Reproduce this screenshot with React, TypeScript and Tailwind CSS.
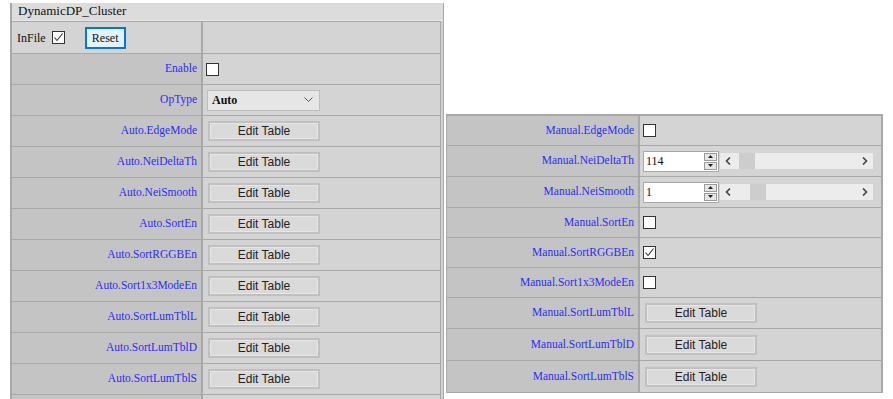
import { ReactNode } from "react";

const autoRows = [
    "Auto.EdgeMode",
    "Auto.NeiDeltaTh",
    "Auto.NeiSmooth",
    "Auto.SortEn",
    "Auto.SortRGGBEn",
    "Auto.Sort1x3ModeEn",
    "Auto.SortLumTblL",
    "Auto.SortLumTblD",
    "Auto.SortLumTblS",
];

export default function App() {
    return (
        <div className="w-[893px] h-[399px] overflow-hidden bg-white flex items-start font-['Liberation_Serif',serif]">
            <div className="ml-[10px] mt-[3px] w-[434px] border-l-2 border-r border-[#a8a8a8] bg-[#d2d2d2]">
                <div className="h-[18px] bg-[#dcdcdc] border-b border-[#e8e8e8] pl-[6px] text-[13px] leading-[16px] text-[#111]">DynamicDP_Cluster</div>
                <div className="mr-[2px] border-t border-[#a8a8a8]">
                    <Row h="h-[32px]" label={
                        <div className="flex items-center h-full pl-[5px] text-[12px] text-[#111] justify-start">
                            InFile
                            <span className="ml-[6px]"><CheckBox checked /></span>
                            <button className="ml-[20px] w-[41px] h-[22px] bg-[#e5f1fb] border-2 border-[#0078d7] text-[12px] text-[#111]">Reset</button>
                        </div>
                    } labelClass="bg-[#d4d4d4]">
                        <span />
                    </Row>
                    <Row label="Enable">
                        <CheckBox />
                    </Row>
                    <Row label="OpType">
                        <Select />
                    </Row>
                    {autoRows.map((r) => (
                        <Row key={r} label={r}>
                            <EditButton />
                        </Row>
                    ))}
                    <Row label="">
                        <span />
                    </Row>
                </div>
            </div>

            <div className="ml-[2px] mt-[114px] w-[437px] border-t-2 border-l border-r-2 border-b border-[#a8a8a8] bg-[#d2d2d2]">
                <Row h="h-[30px]" label="Manual.EdgeMode" right>
                    <CheckBox />
                </Row>
                <Row label="Manual.NeiDeltaTh" right>
                    <NumberSlider value="114" thumb={19} />
                </Row>
                <Row label="Manual.NeiSmooth" right>
                    <NumberSlider value="1" thumb={30} />
                </Row>
                <Row h="h-[30px]" label="Manual.SortEn" right>
                    <CheckBox />
                </Row>
                <Row h="h-[30px]" label="Manual.SortRGGBEn" right>
                    <CheckBox checked />
                </Row>
                <Row h="h-[30px]" label="Manual.Sort1x3ModeEn" right>
                    <CheckBox />
                </Row>
                <Row label="Manual.SortLumTblL" right>
                    <EditButton />
                </Row>
                <Row h="h-[32px]" label="Manual.SortLumTblD" right>
                    <EditButton />
                </Row>
                <Row label="Manual.SortLumTblS" right last>
                    <EditButton />
                </Row>
            </div>
        </div>
    );
}

function Row({ label, children, h = "h-[31px]", right = false, last = false, labelClass = "bg-[#c4c4c4]" }: { label: ReactNode, children: ReactNode, h?: string, right?: boolean, last?: boolean, labelClass?: string }) {
    return (
        <div className={`flex ${h} ${last ? "" : "border-b"} border-[#a8a8a8]`}>
            <div className={`${right ? "w-[193px]" : "w-[191px]"} shrink-0 ${labelClass} border-r-2 border-[#a8a8a8] flex items-center justify-end pr-[4px] text-[11.5px] text-[#2b2bff]`}>
                {typeof label === "string" ? label : <div className="w-full h-full">{label}</div>}
            </div>
            <div className={`flex-1 bg-[#d4d4d4] ${right ? "" : "border-r border-[#a8a8a8]"} flex items-center pl-[3px]`}>
                {children}
            </div>
        </div>
    );
}

function CheckBox({ checked = false }: { checked?: boolean }) {
    return (
        <span className="w-[13px] h-[13px] border border-[#333] bg-white flex items-center justify-center">
            {checked && (
                <svg width="11" height="11" viewBox="0 0 11 11">
                    <polyline points="1.5,5.5 4,8.5 9.5,1.5" fill="none" stroke="#333" strokeWidth="1.1" />
                </svg>
            )}
        </span>
    );
}

function EditButton() {
    return (
        <button className="ml-[2px] w-[112px] h-[20px] bg-[#dadada] border-2 border-[#c0c0c0] shadow-[inset_0_0_0_1px_#e6e6e6] font-['Liberation_Sans',sans-serif] text-[12px] text-[#222] leading-[16px]">
            Edit Table
        </button>
    );
}

function Select() {
    return (
        <div className="ml-[1px] w-[113px] h-[21px] bg-[#e6e6e6] border border-[#bcbcbc] flex items-center justify-between pl-[4px] pr-[6px] text-[12px] font-bold text-[#111]">
            Auto
            <svg width="9" height="6" viewBox="0 0 9 6">
                <polyline points="0.5,0.5 4.5,4.5 8.5,0.5" fill="none" stroke="#555" strokeWidth="1" />
            </svg>
        </div>
    );
}

function NumberSlider({ value, thumb }: { value: string, thumb: number }) {
    return (
        <div className="flex items-center">
            <div className="w-[76px] h-[21px] bg-white border border-[#a8a8a8] flex items-center justify-between">
                <span className="pl-[2px] text-[12px] text-[#111]">{value}</span>
                <div className="flex flex-col gap-px pr-[1px]">
                    <Spin up />
                    <Spin />
                </div>
            </div>
            <div className="ml-[1px] w-[153px] h-[16px] bg-[#ececec] flex items-center relative">
                <svg className="ml-[5px]" width="6" height="8" viewBox="0 0 6 8">
                    <polyline points="5,0.5 1.5,4 5,7.5" fill="none" stroke="#444" strokeWidth="1.6" />
                </svg>
                <div className="absolute top-0 h-[16px] w-[16px] bg-[#cdcdcd]" style={{ left: thumb }} />
                <svg className="ml-auto mr-[5px]" width="6" height="8" viewBox="0 0 6 8">
                    <polyline points="1,0.5 4.5,4 1,7.5" fill="none" stroke="#444" strokeWidth="1.6" />
                </svg>
            </div>
        </div>
    );
}

function Spin({ up = false }: { up?: boolean }) {
    return (
        <div className="w-[13px] h-[8px] bg-[#e6e6e6] border border-[#9a9a9a] flex items-center justify-center">
            <svg width="5" height="3" viewBox="0 0 5 3">
                <polygon points={up ? "0,3 2.5,0 5,3" : "0,0 2.5,3 5,0"} fill="#222" />
            </svg>
        </div>
    );
}
